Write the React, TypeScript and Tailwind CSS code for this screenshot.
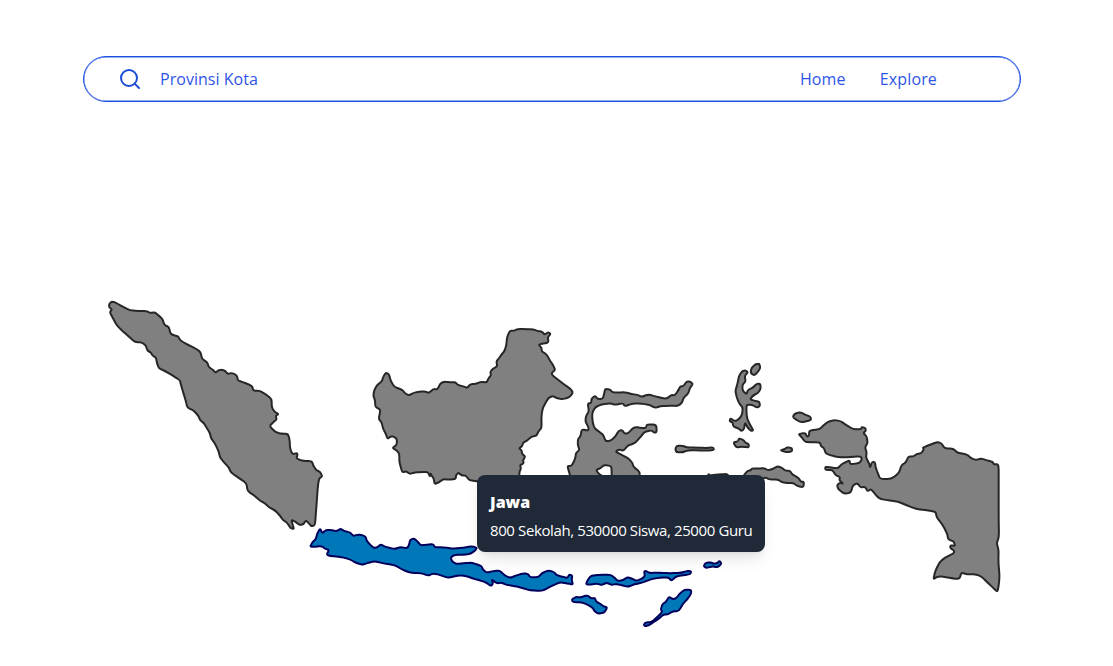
import { Search } from "lucide-react";

type Island = { name: string; x: number; y: number; d: string };

// Outlines are drawn at three units to a pixel, each from its own origin.
const islands: Island[] = [
  {
    name: "Sumatra",
    x: 100,
    y: 295,
    d: "M27 27L35 20L45 22L70 36L90 46L115 48L140 48L150 54L165 52L178 63L188 73L193 90L207 96L211 116L222 121L235 124L240 136L265 150L290 162L302 172L306 192L322 202L326 216L337 223L347 233L355 226L366 224L376 228L383 237L393 234L405 237L412 245L413 256L430 262L450 270L457 275L460 287L480 288L497 298L515 312L515 335L522 349L536 357L527 362L530 373L522 380L508 393L527 412L545 416L564 417L569 435L570 460L577 478L592 474L592 482L589 490L605 497L636 499L640 512L649 526L660 530L667 544L657 550L653 580L651 610L648 650L645 690L635 694L628 687L618 676L610 688L600 690L585 680L574 674L578 690L582 702L572 700L562 684L548 674L540 662L525 646L507 637L495 625L480 617L465 603L442 588L440 565L418 550L392 532L387 518L375 505L360 488L357 472L345 445L333 430L330 415L315 390L312 385L300 375L295 362L280 346L262 338L258 320L252 300L246 280L241 262L240 256L220 243L195 228L177 220L171 205L168 188L158 182L152 172L142 167L138 152L125 142L105 141L90 128L70 110L50 91L42 75L29 52L36 43L28 38Z",
  },
  {
    name: "Kalimantan",
    x: 365,
    y: 320,
    d: "M27 212L37 194L50 185L56 168L63 158L72 163L77 182L88 201L112 209L120 220L132 226L145 219L165 214L182 215L192 219L205 207L218 208L226 190L238 185L255 187L272 187L278 195L295 199L307 204L315 193L335 191L348 185L365 188L371 174L378 166L376 155L384 146L397 139L394 124L402 115L409 104L418 94L424 76L426 52L434 33L447 32L458 27L480 27L505 28L517 33L530 34L539 44L550 36L557 42L548 52L551 68L520 73L530 84L530 94L545 103L555 122L563 133L571 150L560 158L562 166L580 180L600 195L617 207L624 218L613 232L592 238L575 234L563 228L550 234L540 252L533 265L529 290L530 324L520 334L515 347L500 350L484 363L474 368L472 378L462 385L470 391L471 402L481 409L474 421L476 431L465 435L468 446L463 456L463 480L340 485L325 482L312 480L303 467L290 466L280 458L273 466L272 477L250 479L235 477L220 488L209 492L206 475L200 467L197 460L195 470L189 456L170 456L150 457L134 462L124 454L112 457L108 444L103 425L103 402L96 392L82 384L95 375L96 358L87 350L77 349L68 357L62 340L54 326L50 307L41 297L46 272L42 266L31 261L30 240L25 228Z",
  },
  {
    name: "Sulawesi",
    x: 560,
    y: 370,
    d: "M83 100L94 99L94 87L105 77L113 87L128 87L133 70L135 57L150 58L157 67L180 68L192 66L215 72L235 75L245 81L265 73L285 79L318 87L335 75L345 76L356 59L361 49L371 48L380 34L391 35L399 42L390 53L384 72L371 83L366 98L355 108L325 107L300 109L285 114L270 105L245 101L220 100L194 109L190 100L165 104L150 100L125 103L105 112L96 130L98 158L104 175L121 188L130 195L137 214L152 212L166 200L176 182L187 180L193 191L204 190L222 171L250 174L258 174L260 163L289 164L290 187L282 188L275 181L255 185L246 195L232 212L222 221L204 226L190 243L177 238L167 245L180 252L190 257L205 265L217 278L220 290L240 306L238 330L155 330L155 306L154 288L132 285L122 294L108 300L118 313L134 322L134 330L34 330L27 305L22 288L35 288L46 265L48 248L59 240L53 224L54 207L62 198L65 178L85 182L86 173L76 154L78 138L87 124Z",
  },
  {
    name: "Maluku Utara",
    x: 670,
    y: 360,
    d: "M216 34L226 31L234 37L224 48L227 64L217 75L218 92L230 103L233 90L250 82L260 71L271 71L272 87L264 99L250 106L240 118L256 123L268 125L270 138L261 143L246 134L230 134L229 150L231 175L240 194L250 211L243 213L233 203L225 187L222 208L214 213L205 205L190 200L188 187L179 184L181 175L195 184L210 175L217 160L218 142L208 131L200 112L196 92L202 73L207 48ZM244 24L256 13L268 11L271 24L262 38L252 46L242 39ZM190 247L204 244L207 235L220 240L226 248L236 252L237 262L214 260L199 263ZM331 271L344 267L350 262L366 264L366 274L350 277ZM16 267L20 257L38 257L49 262L78 263L110 264L130 262L132 270L110 272L55 270L38 277L19 277Z",
  },
  {
    name: "Maluku",
    x: 670,
    y: 360,
    d: "M220 348L232 333L242 331L246 325L265 326L282 324L294 331L307 327L322 319L334 322L346 332L360 332L366 343L386 354L392 365L402 366L400 382L382 378L370 369L350 369L338 367L322 358L301 359L284 352L275 360L225 360ZM114 342L122 346L145 343L174 342L175 358L118 358Z",
  },
  {
    name: "Papua",
    x: 790,
    y: 405,
    d: "M25 87L47 84L50 95L57 93L58 76L88 73L100 62L113 51L132 45L151 48L169 60L190 73L214 72L215 66L227 69L227 78L220 84L230 94L233 114L225 127L230 142L228 158L238 176L240 188L246 171L255 171L257 188L263 203L270 222L306 222L328 202L334 180L348 172L355 154L369 155L380 147L394 145L402 132L398 128L420 119L442 111L455 115L463 130L490 131L503 144L529 147L544 160L558 165L575 160L590 166L608 170L611 178L626 177L626 230L626 350L627 395L620 415L626 435L625 470L629 518L623 562L609 548L591 531L574 514L556 508L532 508L514 503L509 521L490 521L456 514L440 516L430 523L436 497L450 470L465 458L491 445L493 438L480 428L482 421L495 423L492 410L480 405L474 401L472 387L457 358L440 337L437 320L410 316L378 312L350 301L325 290L285 285L267 280L255 267L243 252L233 259L225 245L212 248L202 234L188 242L183 262L164 267L145 253L141 241L149 233L160 236L148 226L150 216L137 211L128 195L106 195L106 185L125 188L144 190L155 177L171 170L178 166L181 178L209 174L216 161L211 154L182 156L145 157L119 150L107 145L102 129L93 124L90 112L58 112L44 110L36 97ZM8 37L13 27L30 21L45 29L61 35L64 44L50 49L31 52Z",
  },
];

const java: Island[] = [
  {
    name: "Jawa",
    x: 300,
    y: 520,
    d: "M30 80L38 66L47 58L52 40L61 25L66 40L78 30L95 30L110 34L122 26L132 33L150 37L160 48L172 44L183 44L197 50L200 62L212 76L222 84L232 82L242 73L255 80L270 84L285 87L300 81L322 85L328 72L330 60L342 55L352 64L362 76L380 74L400 72L404 82L430 82L460 86L490 83L515 79L531 83L525 92L510 102L490 104L465 104L452 112L456 124L470 132L490 130L515 128L545 138L548 148L560 158L585 152L600 152L612 165L630 174L650 166L670 160L685 162L690 172L715 172L725 160L745 151L762 156L770 166L788 170L802 174L808 164L817 166L815 180L819 194L802 190L780 187L755 198L740 206L725 213L690 211L670 205L645 198L620 195L605 188L590 190L575 178L579 190L574 198L555 186L536 180L520 176L500 168L475 166L445 174L420 165L400 160L385 167L365 160L330 158L305 148L285 135L250 130L225 124L205 128L190 134L170 130L150 118L120 110L90 108L80 104L87 90L75 86L65 78L45 80Z",
  },
  {
    name: "Nusa Tenggara",
    x: 480,
    y: 550,
    d: "M317 103L326 85L334 77L365 74L393 75L405 84L413 93L429 91L442 81L458 87L470 93L489 84L495 76L492 65L497 62L508 69L540 68L570 70L605 68L624 62L634 65L630 73L590 79L583 84L574 92L565 82L540 83L515 87L492 96L474 101L462 103L443 111L420 104L405 102L395 105L380 98L366 105L350 101L331 104ZM275 149L287 141L305 142L314 137L326 138L333 145L345 144L348 155L362 162L370 169L382 172L373 188L355 191L344 184L337 172L320 163L306 157L279 156ZM491 224L497 217L515 216L532 201L547 185L542 178L548 161L558 156L567 140L579 148L589 144L600 130L614 119L633 120L634 130L622 148L609 161L596 184L580 184L562 193L550 194L534 208L520 217L507 225L496 229ZM671 49L676 39L691 37L702 41L713 39L718 32L725 41L713 52L697 49L679 54Z",
  },
];

// Rounds every corner of a closed polygon path with a short quadratic curve.
function soften(d: string, cut = 0.36): string {
  return d
    .split("Z")
    .filter(Boolean)
    .map((ring) => {
      const pts = ring
        .slice(1)
        .split("L")
        .map((pair) => pair.split(" ").map(Number));
      const n = pts.length;
      const toward = (a: number[], b: number[]) =>
        `${(a[0] + (b[0] - a[0]) * cut).toFixed(1)} ${(a[1] + (b[1] - a[1]) * cut).toFixed(1)}`;
      return (
        pts
          .map((p, i) => {
            const prev = pts[(i + n - 1) % n];
            const next = pts[(i + 1) % n];
            return `${i === 0 ? "M" : "L"}${toward(p, prev)}Q${p[0]} ${p[1]} ${toward(p, next)}`;
          })
          .join("") + "Z"
      );
    })
    .join("");
}

function Outline({ island, className }: { island: Island; className: string }) {
  return (
    <path
      aria-label={island.name}
      className={className}
      d={soften(island.d)}
      strokeWidth={6}
      strokeLinejoin="round"
      transform={`translate(${island.x} ${island.y}) scale(0.33333)`}
    />
  );
}

export default function App() {
  return (
    <div className="flex h-[666px] flex-col overflow-hidden bg-white pt-14 font-['Open_Sans','Noto_Sans',sans-serif]">
      <header className="mr-[92px] ml-[83px] flex h-[46px] shrink-0 items-center rounded-full border border-[#1d4fe0] pr-[83px] pl-[34px] text-base text-[#1d4ed8] shadow-[inset_0_0_0_0.4px_#2b5be3]">
        <Search className="mr-[18px] size-6 shrink-0 text-[#1d4ed8]" strokeWidth={2} />
        <span className="text-[16px] tracking-[0.03px] text-[#2f55e6]">Provinsi Kota</span>
        <nav className="ml-auto flex gap-[34px] text-[16px] tracking-[0.15px] text-[#2f55e6]">
          <a>Home</a>
          <a>Explore</a>
        </nav>
      </header>
      <main className="relative flex-1">
        <svg className="block h-[564px] w-full" viewBox="0 102 1113 564">
          {islands.map((island) => (
            <Outline key={island.name} island={island} className="fill-[#808080] stroke-[#262626]" />
          ))}
          {java.map((island) => (
            <Outline key={island.name} island={island} className="fill-[#0077b9] stroke-[#00005c]" />
          ))}
        </svg>
        <div className="absolute top-[373px] left-[477px] flex h-[77px] w-[288px] flex-col rounded-lg bg-[#1f2937] px-[13px] pt-[15px] whitespace-nowrap text-white shadow-lg">
          <strong className="text-[16px] leading-6 font-extrabold">Jawa</strong>
          <span className="mt-[5px] text-[15px] leading-[22px] tracking-[-0.39px]">800 Sekolah, 530000 Siswa, 25000 Guru</span>
        </div>
      </main>
    </div>
  );
}
